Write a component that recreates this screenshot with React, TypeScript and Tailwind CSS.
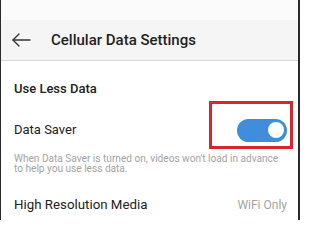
export default function App() {
  return (
    <div className="relative w-[300px] h-[220px] overflow-hidden bg-white border-l border-r-2 border-l-[#2a2a2a] border-r-[#2a2a2a] font-['Roboto',sans-serif] text-[#222]">
      {/* status bar */}
      <div className="h-[20px] bg-[#fbfbfb]" />

      {/* app bar */}
      <div className="h-[41px] flex items-center px-[10px] bg-[#f5f5f5] border-b border-[#d6d6d6]">
        <svg width="20" height="14" viewBox="0 0 20 14" fill="none" stroke="#333" strokeWidth="1.4" strokeLinecap="round" strokeLinejoin="round">
          <path d="M19 7H2" />
          <path d="M8 1L2 7l6 6" />
        </svg>
        <span className="ml-[20px] text-[15px] font-medium leading-none">Cellular Data Settings</span>
      </div>

      <div className="pl-[13px] pr-[11px]">
        <div className="pt-[20px] text-[13px] font-medium leading-[16px]">Use Less Data</div>

        <div className="mt-[20px] h-[26px] flex items-center justify-between">
          <span className="text-[13px] leading-[16px]">Data Saver</span>
          <div className="w-[50px] h-[23px] rounded-full bg-[#3f8ddb] flex items-center justify-end pr-[3px]">
            <div className="w-[16px] h-[16px] rounded-full bg-white" />
          </div>
        </div>

        <p className="mt-[11px] text-[10.1px] leading-[10px] text-[#a3a3a3]">
          When Data Saver is turned on, videos won't load in advance
          <br />
          to help you use less data.
        </p>

        <div className="mt-[22px] flex items-center justify-between leading-[18px]">
          <span className="text-[13.3px]">High Resolution Media</span>
          <span className="text-[12px] text-[#a3a3a3]">WiFi Only</span>
        </div>
      </div>

      {/* highlight box */}
      <div className="absolute left-[208px] top-[101px] w-[84px] h-[48px] border-[3px] border-[#d7262e]" />
    </div>
  );
}
